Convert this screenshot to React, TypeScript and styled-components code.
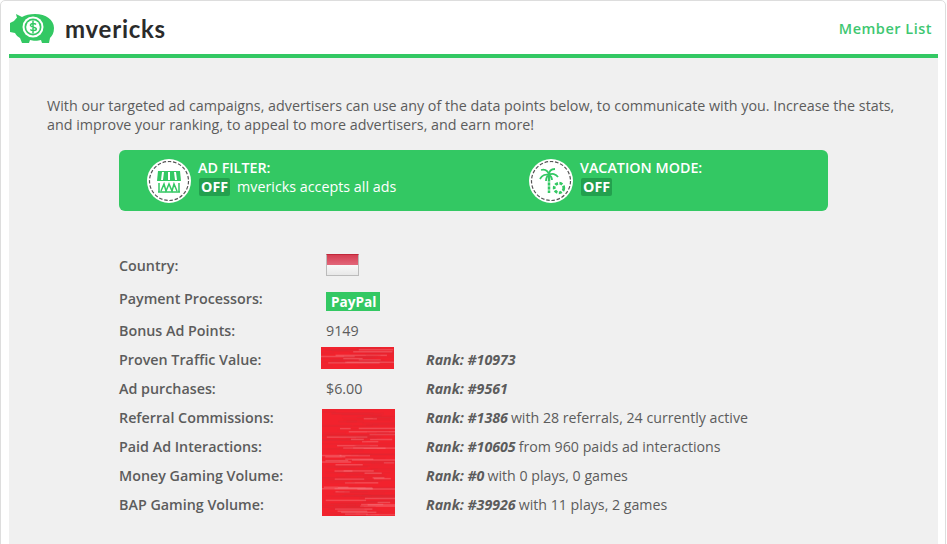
import React from "react";
import styled, { createGlobalStyle } from "styled-components";

const Global = createGlobalStyle`
  html, body { margin: 0; padding: 0; background: #fff; overflow: hidden; }
  body { font-family: "Open Sans", "Liberation Sans", sans-serif; color: #5c5c5c; }
`;
const Card = styled.div`
  box-sizing: border-box; width: 946px; height: 560px; border: 1px solid #ddd; border-radius: 5px;
  background: #fff; padding: 0 7px 0 8px; display: flex; flex-direction: column;
`;
const Header = styled.header`
  height: 53px; flex: none; display: flex; align-items: center; justify-content: space-between;
`;
const Brand = styled.div`display: flex; align-items: center; gap: 10px;`;
const Name = styled.h1`
  margin: 2px 0 0; font: 700 24px "Lato", sans-serif; color: #2b2b2b; letter-spacing: 0.75px;
`;
const MemberLink = styled.a`
  font: 600 14.5px "Open Sans", sans-serif; color: #3ec771; letter-spacing: 0.5px; margin: 2px 6px 0 0;
`;
const Main = styled.main`
  flex: 1; background: #f0f0f0; border-top: 4px solid #33c863; padding: 38px 38px 0;
`;
const Intro = styled.p`
  margin: 0; font-size: 14.3px; line-height: 19px; color: #5c5c5c; width: 860px;
`;
const Banner = styled.section`
  margin: 16px 0 0 72px; width: 709px; height: 61px; border-radius: 6px; background: #33c863;
  display: grid; grid-template-columns: 382px 1fr; padding-left: 28px; box-sizing: border-box; align-items: center; color: #fff;
`;
const Feature = styled.div`display: flex; align-items: center; gap: 7px;`;
const Badge = styled.span`
  width: 44px; height: 44px; border-radius: 50%; background: #fff; display: block; flex: none;
`;
const Stack = styled.div`
  display: flex; flex-direction: column; font-size: 14.3px; font-weight: 600; line-height: 18px; margin-top: -6px;
`;
const FeatureLine = styled.div`display: flex; align-items: center; gap: 7px; font-weight: 400; height: 19px; margin-top: 1px;`;
const Off = styled.span`
  background: #23a04e; border-radius: 2px; font-weight: 700; padding: 0 2px; line-height: 18px; height: 18px; margin-left: 1px;
`;
const Stats = styled.div`
  position: relative; margin: 38px 0 0 72px; display: grid; grid-template-columns: 207px 100px 1fr;
  font-size: 14.3px; align-items: center;
`;
const Label = styled.div<{ $h: number }>`
  font-weight: 600; color: #5c5c5c; height: ${p => p.$h}px; line-height: ${p => p.$h}px;
`;
const Value = styled.div`color: #5c5c5c;`;
const Rank = styled.div`color: #5c5c5c; font-size: 14.2px;`;
const RankNo = styled.b`font-style: italic; font-weight: 700; color: #5c5c5c; margin-right: 3px;`;
const Flag = styled.div`
  width: 33px; height: 22px; border: 1px solid #bbb; border-top-color: #c0283a; box-sizing: border-box; margin-top: -2px;
  background: linear-gradient(#d53e52, #e2677a 50%, #f8f8f8 50%, #e8e8e8);
`;
const Pay = styled.span`
  display: inline-block; background: #33c863; color: #fff; font-weight: 700; padding: 0 4px 0 5px; line-height: 19px; height: 19px; font-size: 13.6px; margin-top: 4px;
`;
const RedactBox = styled.svg<{ $top: number; $left: number }>`
  position: absolute; top: ${p => p.$top}px; left: ${p => p.$left}px; display: block;
`;

const Streaks = ({ top, left, w, h, seed }: { top: number; left: number; w: number; h: number; seed: number }) => {
  let s = seed;
  const rnd = () => { s = (s * 16807) % 2147483647; return s / 2147483647; };
  const bars: React.ReactNode[] = [];
  for (let i = 0; i < h * 1.6; i++) {
    const y = rnd() * h;
    const bw = 10 + rnd() * w * 0.6;
    const x = rnd() * (w - bw / 2) - 4;
    const light = rnd() > 0.78;
    bars.push(
      <rect key={i} x={x} y={y} width={bw} height={light ? 1.5 : 1 + rnd()} fill={light ? "#f57a80" : "#dc2a35"} opacity={light ? 0.45 : 0.28} />
    );
  }
  return (
    <RedactBox $top={top} $left={left} width={w} height={h} viewBox={`0 0 ${w} ${h}`}>
      <rect width={w} height={h} fill="#f2222d" />
      {bars}
    </RedactBox>
  );
};

const Piggy = () => (
  <svg width="46" height="32" viewBox="0 0 46 32">
    <path fill="#33c863" d="M7 2l6 3c3-2 8-3 13-3 11 0 19 6 19 14 0 5-2 8-4 10l-1 5h-7l-1-3c-3 1-8 1-11 0l-1 3h-7l-2-5c-2-1-4-3-5-5l-5-1V11l4-2c1-1 2-3 3-3z"/>
    <circle cx="24" cy="15" r="10.500" fill="#fff"/>
    <circle cx="24" cy="15" r="8.500" fill="#33c863"/>
    <circle cx="24" cy="15" r="6.800" fill="#fff"/>
    <path fill="none" stroke="#33c863" strokeWidth="1.500" d="M27 12.500c-1-1.200-5-1.600-5.500.5-.5 2.800 5.800 1.500 5.800 4 0 2-4.500 2-6 .5M24 8.500v13"/>
  </svg>
);
const Ring = () => (
  <circle cx="22" cy="22" r="19.500" fill="none" stroke="#555" strokeWidth="1.200" strokeDasharray="3.500 1.800"/>
);
const Filter = () => (
  <Badge as="svg" viewBox="0 0 44 44">
    <Ring />
    <path fill="#33c863" d="M11 12h22l1 10H10z"/>
    <path stroke="#fff" strokeWidth="2" d="M16 13l-1 8M22 13v8M28 13l1 8"/>
    <path fill="none" stroke="#33c863" strokeWidth="1.500" d="M12 24v9M32 24v9M11 33h22M14 32l3-7 2 7 3-7 3 7 2-7 3 7"/>
  </Badge>
);
const Palm = () => (
  <Badge as="svg" viewBox="0 0 44 44">
    <Ring />
    <path fill="none" stroke="#33c863" strokeWidth="1.800" d="M20 16c-1-4-4-6-8-5M20 16c0-4 2-6 6-6M20 16c-3-1-7 0-9 4M20 16c3-2 7-1 9 2M20 16c-2 1-3 3-3 6M20 16c2 1 3 3 3 5"/>
    <path fill="none" stroke="#33c863" strokeWidth="2.500" d="M20 17v17"/>
    <path stroke="#fff" strokeWidth=".8" d="M18 23h4M18 27h4M18 31h4"/>
    <circle cx="30" cy="29" r="4.800" fill="none" stroke="#33c863" strokeWidth="2.800" strokeDasharray="3 1.500"/>
  </Badge>
);

const rows = [
  { label: "Proven Traffic Value:", value: "", rank: "#10973", tail: "" },
  { label: "Ad purchases:", value: "$6.00", rank: "#9561", tail: "" },
  { label: "Referral Commissions:", value: "", rank: "#1386", tail: "with 28 referrals, 24 currently active" },
  { label: "Paid Ad Interactions:", value: "", rank: "#10605", tail: "from 960 paids ad interactions" },
  { label: "Money Gaming Volume:", value: "", rank: "#0", tail: "with 0 plays, 0 games" },
  { label: "BAP Gaming Volume:", value: "", rank: "#39926", tail: "with 11 plays, 2 games" },
];

export default function App() {
  return (
    <>
      <Global />
      <Card>
        <Header>
          <Brand><Piggy /><Name>mvericks</Name></Brand>
          <MemberLink>Member List</MemberLink>
        </Header>
        <Main>
          <Intro>
            With our targeted ad campaigns, advertisers can use any of the data points below, to communicate with you. Increase the stats, and improve your ranking, to appeal to more advertisers, and earn more!
          </Intro>
          <Banner>
            <Feature>
              <Filter />
              <Stack>
                AD FILTER:
                <FeatureLine><Off>OFF</Off>mvericks accepts all ads</FeatureLine>
              </Stack>
            </Feature>
            <Feature>
              <Palm />
              <Stack>
                VACATION MODE:
                <FeatureLine><Off>OFF</Off></FeatureLine>
              </Stack>
            </Feature>
          </Banner>
          <Stats>
            <Label $h={33}>Country:</Label><Value><Flag /></Value><div />
            <Label $h={34}>Payment Processors:</Label><Value><Pay>PayPal</Pay></Value><div />
            <Label $h={29}>Bonus Ad Points:</Label><Value>9149</Value><div />
            {rows.map(r => (
              <React.Fragment key={r.label}>
                <Label $h={29}>{r.label}</Label>
                <Value>{r.value}</Value>
                <Rank><RankNo>Rank: {r.rank}</RankNo>{r.tail}</Rank>
              </React.Fragment>
            ))}
            <Streaks top={98} left={202} w={73} h={22} seed={71} />
            <Streaks top={160} left={203} w={73} h={107} seed={4242} />
          </Stats>
        </Main>
      </Card>
    </>
  );
}
